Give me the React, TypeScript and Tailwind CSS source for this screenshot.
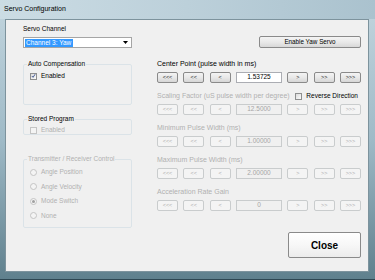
import React from 'react';

const font = "font-['Liberation_Sans',Arial,sans-serif]";

const Check = ({ checked, disabled }: { checked?: boolean; disabled?: boolean }) => (
    <span
        className={`w-[7px] h-[7px] border flex items-center justify-center shrink-0 ${disabled ? 'border-[#c4c4c4] bg-[#f4f4f4]' : 'border-[#8e8f8f] bg-gradient-to-br from-[#dcdcdc] to-[#fbfbfb]'}`}
    >
        {checked && (
            <svg width="6" height="6" viewBox="0 0 6 6">
                <path d="M1 3 L2.5 4.6 L5 0.8" fill="none" stroke="#4a5f97" strokeWidth="1.2" />
            </svg>
        )}
    </span>
);

const Radio = ({ selected }: { selected?: boolean }) => (
    <span className="w-[7px] h-[7px] rounded-full border border-[#c4c4c4] bg-[#f4f4f4] flex items-center justify-center shrink-0">
        {selected && <span className="w-[3px] h-[3px] rounded-full bg-[#a0a0a0]" />}
    </span>
);

const StepButton = ({ label, disabled }: { label: string; disabled?: boolean }) => (
    <div
        className={`w-[21px] h-[11px] rounded-[2px] border flex items-center justify-center text-[5.5px] leading-none ${disabled ? 'border-[#c9cccd] bg-[#f4f4f4] text-[#b0b0b0]' : 'border-[#8a8a8a] bg-gradient-to-b from-[#f4f4f4] via-[#e8e8e8] to-[#d6d6d6] text-[#222]'}`}
    >
        {label}
    </div>
);

const StepRow = ({ value, disabled }: { value: string; disabled?: boolean }) => (
    <div className="flex justify-between items-center h-[11px]">
        <StepButton label="<<<" disabled={disabled} />
        <StepButton label="<<" disabled={disabled} />
        <StepButton label="<" disabled={disabled} />
        <div
            className={`w-[46px] h-[11px] border flex items-center justify-center text-[6.5px] leading-none ${disabled ? 'border-[#c9cccd] bg-[#f0f0f0] text-[#a6a6a6]' : 'border-[#abadb3] bg-white text-black'}`}
        >
            {value}
        </div>
        <StepButton label=">" disabled={disabled} />
        <StepButton label=">>" disabled={disabled} />
        <StepButton label=">>>" disabled={disabled} />
    </div>
);

const GroupBox = ({ title, disabled, className, children }: { title: string; disabled?: boolean; className: string; children?: React.ReactNode }) => (
    <fieldset className={`border border-[#dbe3e8] rounded-[2px] ${className}`}>
        <legend className={`ml-[3px] px-[1px] text-[6.5px] leading-[8px] ${disabled ? 'text-[#b0b0b0]' : 'text-black'}`}>{title}</legend>
        {children}
    </fieldset>
);

export default function App() {
    return (
        <div className={`w-[375px] h-[280px] flex flex-col bg-gradient-to-b from-[#c2d5de] via-[#9fbac7] to-[#5f808d] ${font}`}>
            <div className="h-[19px] flex items-center pl-[4px] bg-gradient-to-r from-[#cbdce4] via-[#bcd0da] to-[#aac2ce] text-[7px] text-black">
                Servo Configuration
            </div>
            <div className="flex-1 flex pl-[5px] pr-[6px] pb-[7px] border-b border-[#2e4752]">
                <div className="flex-1 flex bg-[#f0f0f0] border border-[#7d939d] pl-[17px] pr-[7px] pt-[5px]">
                    {/* left column */}
                    <div className="w-[109px] flex flex-col">
                        <div className="h-[8px] text-[6.5px] leading-[8px] text-black">Servo Channel</div>
                        <div className="mt-[4px] h-[11px] bg-white border border-[#a5a5a5] flex items-center pl-[1px] pr-[3px]">
                            <span className="bg-[#3399ff] text-white text-[6.5px] leading-[8px] px-[1px] pr-[2px]">Channel 3: Yaw</span>
                            <svg className="ml-auto" width="5" height="3" viewBox="0 0 5 3">
                                <path d="M0 0 H5 L2.5 3 Z" fill="#000" />
                            </svg>
                        </div>

                        <GroupBox title="Auto Compensation" className="mt-[12px] h-[45px]">
                            <div className="pt-[4px] pl-[6px] flex items-center gap-[4px] h-[12px]">
                                <Check checked />
                                <span className="text-[6.5px] leading-[8px] text-black">Enabled</span>
                            </div>
                        </GroupBox>

                        <GroupBox title="Stored Program" className="mt-[10px] h-[20px]">
                            <div className="pt-[3px] pl-[6px] flex items-center gap-[4px] h-[11px]">
                                <Check disabled />
                                <span className="text-[6.5px] leading-[8px] text-[#b0b0b0]">Enabled</span>
                            </div>
                        </GroupBox>

                        <GroupBox title="Transmitter / Receiver Control" disabled className="mt-[20px] h-[73px]">
                            <div className="pt-[5px] pl-[6px] flex flex-col gap-[6.5px]">
                                {['Angle Position', 'Angle Velocity', 'Mode Switch', 'None'].map((item) => (
                                    <div key={item} className="h-[8px] flex items-center gap-[4px]">
                                        <Radio selected={item === 'Mode Switch'} />
                                        <span className="text-[6.5px] leading-[8px] text-[#b0b0b0]">{item}</span>
                                    </div>
                                ))}
                            </div>
                        </GroupBox>
                    </div>

                    {/* right column */}
                    <div className="ml-[25px] w-[204px] flex flex-col">
                        <div className="self-end mt-[11px] w-[102px] h-[12px] rounded-[2px] border border-[#8a8a8a] bg-gradient-to-b from-[#f4f4f4] via-[#e9e9e9] to-[#d8d8d8] flex items-center justify-center text-[6.3px] leading-none text-black">
                            Enable Yaw Servo
                        </div>

                        <div className="mt-[12px] h-[8px] text-[7px] leading-[8px] text-black">Center Point (pulse width in ms)</div>
                        <div className="mt-[4px]">
                            <StepRow value="1.53725" />
                        </div>

                        <div className="mt-[9px] h-[8px] flex items-center">
                            <span className="text-[7px] leading-[8px] text-[#b0b0b0]">Scaling Factor (uS pulse width per degree)</span>
                            <div className="ml-auto mr-[3px] flex items-center gap-[4px]">
                                <Check />
                                <span className="text-[6.5px] leading-[8px] text-black">Reverse Direction</span>
                            </div>
                        </div>
                        <div className="mt-[4px]">
                            <StepRow value="12.5000" disabled />
                        </div>

                        <div className="mt-[9px] h-[8px] text-[7px] leading-[8px] text-[#b0b0b0]">Minimum Pulse Width (ms)</div>
                        <div className="mt-[4px]">
                            <StepRow value="1.00000" disabled />
                        </div>

                        <div className="mt-[9px] h-[8px] text-[7px] leading-[8px] text-[#b0b0b0]">Maximum Pulse Width (ms)</div>
                        <div className="mt-[4px]">
                            <StepRow value="2.00000" disabled />
                        </div>

                        <div className="mt-[9px] h-[8px] text-[7px] leading-[8px] text-[#b0b0b0]">Acceleration Rate Gain</div>
                        <div className="mt-[4px]">
                            <StepRow value="0" disabled />
                        </div>

                        <div className="self-end mt-[21px] w-[73px] h-[26px] rounded-[2px] border border-[#8a8a8a] bg-gradient-to-b from-[#ffffff] via-[#f7f7f7] to-[#ececec] flex items-center justify-center text-[10px] font-bold text-black">
                            Close
                        </div>
                    </div>
                </div>
            </div>
        </div>
    );
}
